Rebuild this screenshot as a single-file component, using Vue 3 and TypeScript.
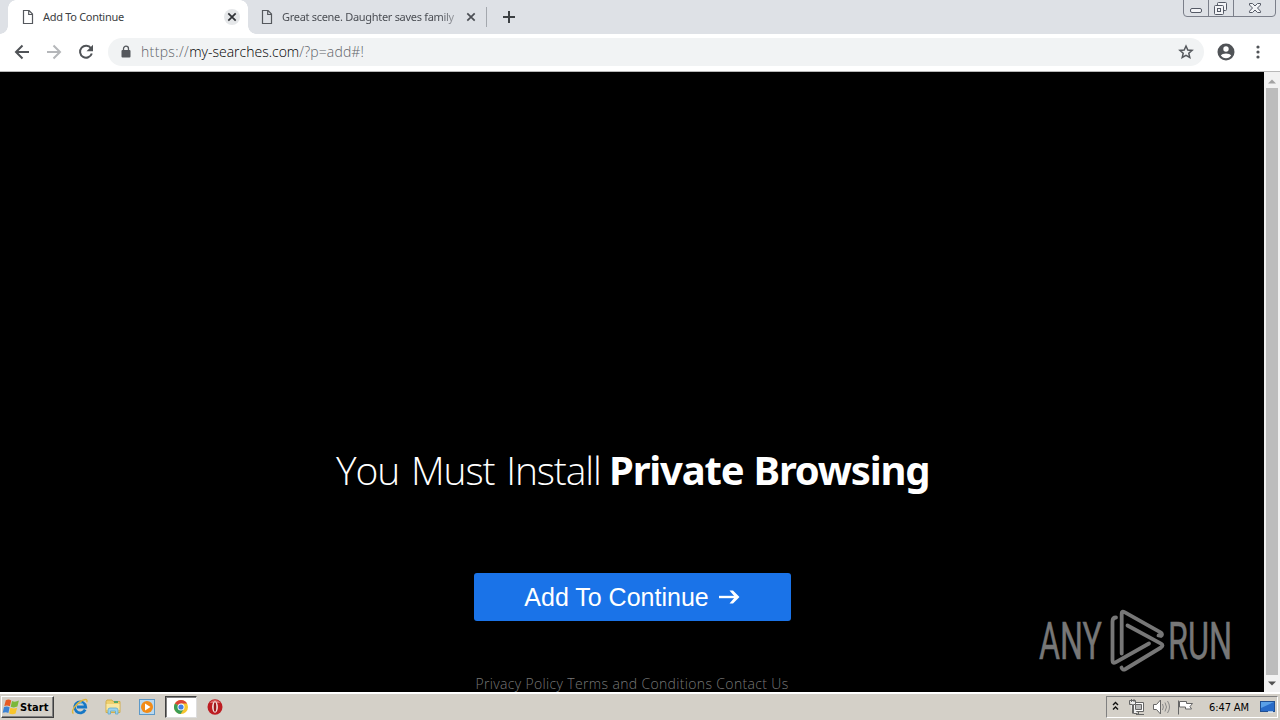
<script setup lang="ts">
interface Tab {
  title: string
  active: boolean
}

const tabs: Tab[] = [
  { title: 'Add To Continue', active: true },
  { title: 'Great scene. Daughter saves family', active: false },
]
const links: string[] = ['Privacy Policy', 'Terms and Conditions', 'Contact Us']
</script>

<template>
  <div class="screen">
    <header class="tabstrip">
      <div v-for="tab in tabs" :key="tab.title" class="tab" :class="{ active: tab.active }">
        <svg class="page-icon" width="12" height="16" viewBox="0 0 12 16">
          <path d="M1.5 1.5h5.6l3.4 3.6v9.4h-9zM6.7 1.8v3.7h3.6" fill="none" stroke="#55585d" stroke-width="1.2" />
        </svg>
        <span class="tab-title">{{ tab.title }}</span>
        <span class="tab-close">
          <svg width="16" height="16" viewBox="0 0 16 16"><path d="M4.3 4.3l7.4 7.4M11.7 4.3l-7.4 7.4" stroke="currentColor" stroke-width="1.7" /></svg>
        </span>
      </div>
      <span class="divider"></span>
      <svg class="new-tab" width="14" height="14" viewBox="0 0 14 14"><path d="M7 1v12M1 7h12" stroke="#3c4043" stroke-width="2" /></svg>
      <svg class="window-buttons" width="94" height="18" viewBox="0 0 94 18">
        <path d="M.5 0v13q0 3.5 3.5 3.5h85q3.5 0 3.5-3.5V0M25.5 0v16M50.5 0v16" fill="none" stroke="#7b7f8a" />
        <g fill="#f3f4f7" stroke="#555a66">
          <rect x="7.5" y="8.5" width="11" height="4" rx="1.5" />
          <rect x="34.5" y="2.5" width="9" height="8" rx="1" />
          <rect x="31.5" y="5.5" width="9" height="9" rx="1" />
          <rect x="34.5" y="8.5" width="3" height="3" />
          <path d="M66.5 3.5h3l2.500 2.500 2.500-2.500h3v1.500L74.500 8l3 3.200v1.300h-3l-2.500-2.500-2.500 2.500h-3v-1.300l3-3.200-3-3z" />
        </g>
      </svg>
    </header>

    <nav class="toolbar">
      <svg class="nav-icon" width="16" height="16" viewBox="0 0 16 16"><path d="M15 8H2M8.5 1.5L2 8l6.5 6.5" fill="none" stroke="#505357" stroke-width="2" /></svg>
      <svg class="nav-icon" width="16" height="16" viewBox="0 0 16 16"><path d="M1 8h13M7.5 1.5L14 8l-6.5 6.5" fill="none" stroke="#b5b7ba" stroke-width="2" /></svg>
      <svg class="nav-icon" width="16" height="16" viewBox="0 0 16 16">
        <path d="M13 4.300A6 6 0 1 0 13.800 9.500" fill="none" stroke="#505357" stroke-width="2" />
        <path d="M15 .8v6.500H8.500z" fill="#505357" />
      </svg>
      <div class="omnibox">
        <svg width="10" height="14" viewBox="0 0 10 14">
          <rect x="0.5" y="5" width="9" height="7.500" rx="1" fill="#55585d" />
          <path d="M2.500 5.500V3.700a2.500 2.500 0 0 1 5 0v1.800" fill="none" stroke="#55585d" stroke-width="1.300" />
        </svg>
        <span class="url"><span class="scheme">https://</span><span class="host">my-searches.com</span><span class="path">/?p=add#!</span></span>
        <svg class="star" width="18" height="18" viewBox="0 0 18 18">
          <path d="M9 3l1.800 4 4.300.4-3.300 2.900 1 4.200L9 12.300l-3.800 2.200 1-4.200-3.300-2.900 4.300-.4z" fill="none" stroke="#55585d" stroke-width="1.500" />
        </svg>
      </div>
      <svg class="avatar" width="18" height="18" viewBox="0 0 18 18">
        <circle cx="9" cy="9" r="8.500" fill="#505357" />
        <circle cx="9" cy="6" r="2.700" fill="#fff" />
        <path d="M3.800 12.300Q5.200 10.400 9 10.400t5.200 1.900Q12.500 15.200 9 15.200t-5.200-2.900z" fill="#fff" />
      </svg>
      <svg class="menu" width="4" height="14" viewBox="0 0 4 14">
        <g fill="#505357"><circle cx="2" cy="2" r="1.600" /><circle cx="2" cy="7" r="1.600" /><circle cx="2" cy="12" r="1.600" /></g>
      </svg>
    </nav>

    <div class="viewport">
      <main class="page">
        <h1><span class="thin">You Must Install</span><b>Private Browsing</b></h1>
        <button class="cta">
          <span>Add To Continue</span>
          <svg width="21" height="18" viewBox="0 0 21 18"><path d="M0 9h17" stroke="#fff" stroke-width="2.400" /><path d="M10.500 2.500h3.500L20.500 9 14 15.500h-3.500L16 9z" fill="#fff" /></svg>
        </button>
        <footer><a v-for="link in links" :key="link">{{ link }}</a></footer>
        <svg class="watermark" width="220" height="80" viewBox="0 0 220 80">
          <g fill="#777" stroke="#777" stroke-width=".5" font-family="Roboto, 'Liberation Sans', sans-serif" font-size="51.5">
            <text transform="translate(9 59) scale(.625 1)">ANY</text>
            <text transform="translate(138 59) scale(.63 1)">RUN</text>
          </g>
          <g fill="none" stroke="#777" stroke-width="3.800" stroke-linejoin="round" stroke-linecap="round">
            <path d="M91.700 53.500V13.500q0-3 2.800-1.300l36.500 20.500q2 2 0 3.300l-2.500-.5" />
            <path d="M86 17.500q-3.500 0-3.500 4v39q0 3.500 3 1.800L119 43.500" />
            <path d="M91.500 67.500q1 3.200 4 1.500L131 47.500q3-2 0-3.800L97.500 25.500" />
          </g>
        </svg>
      </main>
      <aside class="scrollbar">
        <svg width="8" height="5" viewBox="0 0 8 5"><path d="M0 4.500L4 .5l4 4z" fill="#a2a2a2" /></svg>
        <span class="thumb"></span>
        <svg width="8" height="5" viewBox="0 0 8 5"><path d="M0 .5h8L4 4.500z" fill="#505050" /></svg>
      </aside>
    </div>

    <footer class="taskbar">
      <div class="start">
        <svg width="18" height="16" viewBox="0 0 18 16">
          <path d="M3.800 1.300q3-1.500 5.400.3L7.900 7.300q-2.700-1.500-5.600-.3z" fill="#e65a23" />
          <path d="M10 2q3 1.500 6.900-.4L15.400 7.600q-3.400 1.600-6.700.1z" fill="#7bb83b" />
          <path d="M2 8q2.900-1.200 5.600.2L6.400 14q-2.500-1.500-5.700-.2z" fill="#3b82d4" />
          <path d="M8.400 8.700q3.400 1.600 6.700 0l-1.500 5.900q-3.300 1.500-6.500-.1z" fill="#f8c52b" />
        </svg>
        <span>Start</span>
      </div>
      <div class="quick">
        <svg class="ie" width="18" height="18" viewBox="0 0 18 18">
          <path d="M14.200 11.700A5.500 5.500 0 1 1 14.700 9H6" fill="none" stroke="#1677c5" stroke-width="2.800" />
          <path d="M5.500 7.300Q6.700 4.500 9 4.500t3.300 2.300" fill="none" stroke="#73c4ee" />
          <path d="M2.500 15.500C-1 14 5 5 12 2.200q5-2 3.800 2" fill="none" stroke="#dfb63b" stroke-width="1.400" />
        </svg>
      </div>
      <div class="quick">
        <svg width="18" height="18" viewBox="0 0 18 18">
          <path d="M2 3.500l1-1.500h5l1 1.500h7v11H2z" fill="#efd06e" stroke="#d2ae4c" />
          <path d="M2.500 6h13v6h-13z" fill="#f9e7a0" /><path d="M10 4h4" stroke="#55a868" stroke-width="2" />
          <path d="M4 16v-4q0-2 2-2h6q2 0 2 2v4h-2.500v-3h-5v3z" fill="#9bd2ed" stroke="#5fa9cf" stroke-width=".8" />
        </svg>
      </div>
      <div class="quick">
        <svg width="18" height="18" viewBox="0 0 18 18">
          <rect x="1.500" y="1.500" width="15" height="15" fill="#b9d8ef" stroke="#5d99c8" />
          <circle cx="9" cy="9" r="6" fill="#f28b17" /><path d="M7 5.500v7L12.500 9z" fill="#fff" />
        </svg>
      </div>
      <div class="quick pressed">
        <svg width="16" height="16" viewBox="0 0 16 16">
          <circle cx="8" cy="8" r="7" fill="#f6c52e" />
          <path d="M8 8L1.900 4.500A7 7 0 0 1 14.100 4.500H8z" fill="#db4437" />
          <path d="M8 8L1.900 4.500A7 7 0 0 0 7.600 15L11 9.700z" fill="#3c9d55" />
          <circle cx="8" cy="8" r="3.500" fill="#fff" /><circle cx="8" cy="8" r="2.600" fill="#437fe4" />
        </svg>
      </div>
      <div class="quick">
        <svg width="18" height="18" viewBox="0 0 18 18">
          <ellipse cx="9" cy="9" rx="7.500" ry="7.700" fill="#bd1d22" /><path d="M3.500 5Q9-1 14.500 5z" fill="#dd6a6a" />
          <ellipse cx="9" cy="9" rx="2.900" ry="5.700" fill="#f3e7e4" /><ellipse cx="9" cy="9" rx="1.300" ry="4.700" fill="#9b171b" />
        </svg>
      </div>
      <div class="tray">
        <svg width="86" height="20" viewBox="0 0 86 20">
          <path d="M6 8l2.500-2.500L11 8M6 12.500L8.500 10l2.500 2.500" fill="none" stroke="#111" stroke-width="1.400" />
          <g stroke="#666" fill="#fff">
            <path d="M26.500 5.500h10v9h-10zM29 17.500h8M31.500 14.500v3" /><path d="M28.500 7.500h6v5h-6z" fill="#bbb" />
            <path d="M22.500 3.500h6v4h-2v9h4M22.500 3.500v4h3v9" fill="#eee" /><path d="M24.500 2v3M27 2v3" />
            <path d="M46.500 7.500h3L53.500 3v14l-4-4.500h-3z" />
            <path d="M55.500 7q1.700 3 0 6M58 5.500q3 4.500 0 9M60.500 4q4 6 0 12" fill="none" stroke="#888" />
            <path d="M71.500 3.500v14M72.500 4.500h7v2h6l-2.500 3 1.500 2.500h-6v-2h-6z" />
          </g>
        </svg>
        <time>6:47 AM</time>
        <svg width="16" height="14" viewBox="0 0 16 14"><rect x=".5" y="1.500" width="14" height="10" fill="#286bc8" stroke="#204f92" /><path d="M1 2h13L1 8z" fill="#5aa0e7" /><path d="M8 12h5" stroke="#d8e8f8" stroke-width="1.500" /></svg>
      </div>
    </footer>
  </div>
</template>

<style>
body { margin: 0; background: #000; overflow: hidden; }
</style>

<style scoped>
* { box-sizing: border-box; }
svg { display: block; flex: none; }
.screen { width: 1280px; height: 720px; display: flex; flex-direction: column; overflow: hidden; font-family: "Open Sans", "Noto Sans", sans-serif; }
.tabstrip { height: 34px; display: flex; background: #dee1e6; flex: none; }
.tab { height: 34px; display: flex; align-items: center; color: #4b4e54; width: 239px; padding: 0 8px 0 13px; }
.tab.active { width: 248px; color: #3c4043; padding: 0 8px 0 22px; background: radial-gradient(circle at 0 0, transparent 7.500px, #fff 8px) 0 26px / 8px 8px no-repeat, linear-gradient(#fff, #fff) 8px 8px / 240px 26px no-repeat, linear-gradient(#fff, #fff) 16px 0 / 224px 8px no-repeat, radial-gradient(circle at 8px 8px, #fff 7.500px, transparent 8px) 8px 0 / 8px 8px no-repeat, radial-gradient(circle at 0 8px, #fff 7.500px, transparent 8px) 240px 0 / 8px 8px no-repeat; }
.tab:nth-child(2) { background: radial-gradient(circle at 8px 0, transparent 7.500px, #fff 8px) 0 26px / 8px 8px no-repeat; }
.tab-title { font: 11px/16px "Noto Sans", sans-serif; margin-left: 9px; flex: 1; white-space: nowrap; letter-spacing: -0.300px; margin-top: -1px; }
.tab:nth-child(2) .tab-title { letter-spacing: -0.300px; -webkit-mask-image: linear-gradient(90deg, #000 158px, rgba(0, 0, 0, 0.300) 176px); }
.tab-close { width: 16px; height: 16px; border-radius: 50%; }
.active .tab-close { background: #e5e7e9; color: #303236; }
.divider { width: 1px; height: 20px; background: #a4a8ae; margin: 7px 15px 0 -1px; }
.new-tab { margin-top: 10px; }
.window-buttons { margin-left: auto; margin-right: 3px; }
.toolbar { height: 38px; flex: none; display: flex; align-items: center; background: #fff; padding: 0 19px 2px 14px; border-bottom: 1px solid #b8b8b8; }
.nav-icon { margin-right: 16px; }
.omnibox { height: 28px; width: 1096px; margin-left: -2px; padding: 0 9px 0 13px; border-radius: 14px; background: #f1f3f4; display: flex; align-items: center; }
.url { font-weight: 300; font-size: 14px; margin-left: 10px; white-space: nowrap; color: #5f6368; letter-spacing: 0.150px; }
.host { color: #000; letter-spacing: 0; }
.scheme { letter-spacing: 0.350px; }
.star { margin-left: auto; }
.avatar { margin-left: 13px; }
.menu { margin-left: 21px; }
.viewport { display: flex; height: 620px; flex: none; }
.page { width: 1264px; background: #000; color: #fff; display: flex; flex-direction: column; align-items: center; position: relative; overflow: hidden; }
h1 { margin: 370px 0 0; font-size: 40px; line-height: 56px; font-weight: 300; white-space: nowrap; display: flex; gap: 12px; }
.thin { width: 262px; font-size: 39px; letter-spacing: -1.150px; word-spacing: 3px; padding-left: 1px; }
h1 b { width: 320px; font-weight: 700; font-family: "Noto Sans", sans-serif; letter-spacing: -1.200px; word-spacing: 1px; }
.cta { margin-top: 75px; width: 317px; height: 48px; flex: none; border: 0; border-radius: 3px; background: #1a73e8; color: #fff; font: 25px "Liberation Sans", Arial, sans-serif; display: flex; align-items: center; justify-content: center; gap: 10px; padding: 0; white-space: nowrap; }
.page footer { margin-top: 53px; height: 20px; display: flex; gap: 4px; font-size: 14px; line-height: 20px; font-weight: 300; color: #777; white-space: nowrap; letter-spacing: 0.340px; }
.watermark { position: absolute; left: 1030px; top: 528px; }
.scrollbar { width: 16px; background: #f1f1f1; display: flex; flex-direction: column; align-items: center; padding: 7px 0 6px; }
.thumb { width: 12px; height: 587px; margin: 4px 0 auto; background: #bcbcbc; }
.taskbar { height: 28px; flex: none; display: flex; align-items: center; background: #d4d0c8; border-top: 2px solid #fff; padding: 0 2px 0 1px; }
.start { width: 53px; height: 22px; margin-right: 9px; display: flex; align-items: center; font: bold 11px "DejaVu Sans Condensed", "DejaVu Sans", sans-serif; color: #000; border: 1px solid; border-color: #fff #404040 #404040 #fff; box-shadow: inset -1px -1px #808080; letter-spacing: 0.100px; }
.quick { width: 32px; height: 22px; margin-right: 2px; display: flex; align-items: center; justify-content: center; }
.ie { margin-left: 2px; }
.pressed { background: #fff; border: 1px solid; border-color: #404040 #ddd #ddd #404040; box-shadow: inset 1px 1px #808080; }
.tray { margin-left: auto; width: 172px; height: 22px; display: flex; align-items: center; border: 1px solid; border-color: #808080 #fff #fff #808080; }
.tray time { font: 11px "DejaVu Sans Condensed", "DejaVu Sans", sans-serif; letter-spacing: -0.100px; margin-left: 16px; width: 51px; white-space: nowrap; color: #000; }
</style>
